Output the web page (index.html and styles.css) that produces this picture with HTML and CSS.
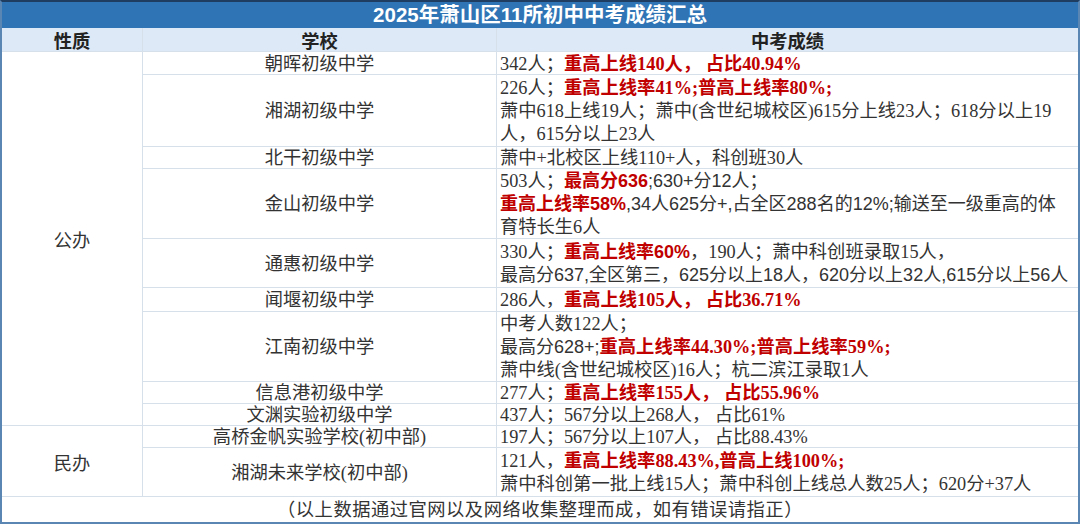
FILE: index.html
```html
<!DOCTYPE html>
<html lang="zh-CN">
<head>
<meta charset="utf-8">
<title>2025年萧山区11所初中中考成绩汇总</title>
<link rel="stylesheet" href="styles.css">
</head>
<body>
<div class="sheet">
  <div class="title">2025年萧山区11所初中中考成绩汇总</div>
  <div class="grid">
    <div class="hd">性质</div>
    <div class="hd school">学校</div>
    <div class="hd">中考成绩</div>

    <div class="type public">公办</div>
    <div class="type private">民办</div>

    <div class="school">朝晖初级中学</div>
    <div class="score"><p>342人；<b>重高上线140人， 占比40.94%</b></p></div>

    <div class="school">湘湖初级中学</div>
    <div class="score"><p>226人；<b>重高上线率41%;普高上线率80%;</b><br>萧中618上线19人；萧中(含世纪城校区)615分上线23人；618分以上19<br>人，615分以上23人</p></div>

    <div class="school">北干初级中学</div>
    <div class="score"><p>萧中+北校区上线110+人，科创班30人</p></div>

    <div class="school">金山初级中学</div>
    <div class="score"><p>503人；<b class="sans">最高分636</b><span class="sans">;630+分12人；</span><br><b class="sans">重高上线率58%</b><span class="sans">,34人625分+,占全区288名的12%;输送至一级重高的体</span><br>育特长生6人</p></div>

    <div class="school">通惠初级中学</div>
    <div class="score"><p>330人；<b class="sans">重高上线率60%</b>，190人；萧中科创班录取15人，<br><span class="sans">最高分637,全区第三，625分以上18人，620分以上32人,615分以上56人</span></p></div>

    <div class="school">闻堰初级中学</div>
    <div class="score"><p>286人，<b>重高上线105人， 占比36.71%</b></p></div>

    <div class="school">江南初级中学</div>
    <div class="score"><p>中考人数122人；<br><span class="sans">最高分628+;</span><b>重高上线率44.30%;普高上线率59%;</b><br>萧中线(含世纪城校区)16人；杭二滨江录取1人</p></div>

    <div class="school">信息港初级中学</div>
    <div class="score"><p>277人；<b>重高上线率155人， 占比55.96%</b></p></div>

    <div class="school">文渊实验初级中学</div>
    <div class="score"><p>437人；567分以上268人， 占比61%</p></div>

    <div class="school">高桥金帆实验学校(初中部)</div>
    <div class="score"><p>197人；567分以上107人， 占比88.43%</p></div>

    <div class="school">湘湖未来学校(初中部)</div>
    <div class="score"><p>121人，<b>重高上线率88.43%,普高上线100%;</b><br>萧中科创第一批上线15人；萧中科创上线总人数25人；620分+37人</p></div>

    <div class="foot">（以上数据通过官网以及网络收集整理而成，如有错误请指正）</div>
  </div>
</div>
</body>
</html>
```

FILE: styles.css
```css
* { box-sizing: border-box; }

html, body {
  margin: 0;
  padding: 0;
  background: #ffffff;
}

.sheet {
  width: 1080px;
  height: 524px;
  border: 2px solid #5a86b4;
  border-top-color: #1f3d60;
  display: flex;
  flex-direction: column;
  font-family: "Liberation Serif", "Noto Sans CJK SC", serif;
  font-size: 18.3px;
  color: #333333;
}

.title {
  height: 26px;
  background: #2f74b5;
  color: #ffffff;
  font-family: "Liberation Sans", "Noto Sans CJK SC", sans-serif;
  font-weight: 700;
  font-size: 20.5px;
  line-height: 26px;
  text-align: center;
}

.grid {
  display: grid;
  grid-template-columns: 140px 353px 1fr;
  grid-template-rows: 23px 22px 71px 21px 69px 48px 23px 69px 21px 21px 21px 48px 25px;
  gap: 1px;
  background: #d6e0eb;
  height: 494px;
}

.grid > div {
  background: #ffffff;
  display: flex;
  align-items: center;
  line-height: 23px;
  white-space: nowrap;
  padding-top: 2px;
}

.grid > .hd {
  background: #dde9f6;
  font-family: "Noto Sans CJK SC", sans-serif;
  font-weight: 700;
  color: #222222;
  justify-content: center;
}

.grid > .type {
  grid-column: 1;
  justify-content: center;
  font-family: "Noto Sans CJK SC", sans-serif;
}

.public { grid-row: 2 / 11; }
.private { grid-row: 11 / 13; }

.grid > .school {
  justify-content: center;
}

.grid > .score {
  padding-left: 3px;
}

.score p {
  margin: 0;
  line-height: 23px;
}

.score b {
  color: #c00000;
  font-weight: 700;
}

.sans {
  font-family: "Liberation Sans", "Noto Sans CJK SC", sans-serif;
  font-size: 18px;
}

.grid > .foot {
  grid-column: 1 / -1;
  grid-row: 13;
  justify-content: center;
  letter-spacing: 0.5px;
}
```
